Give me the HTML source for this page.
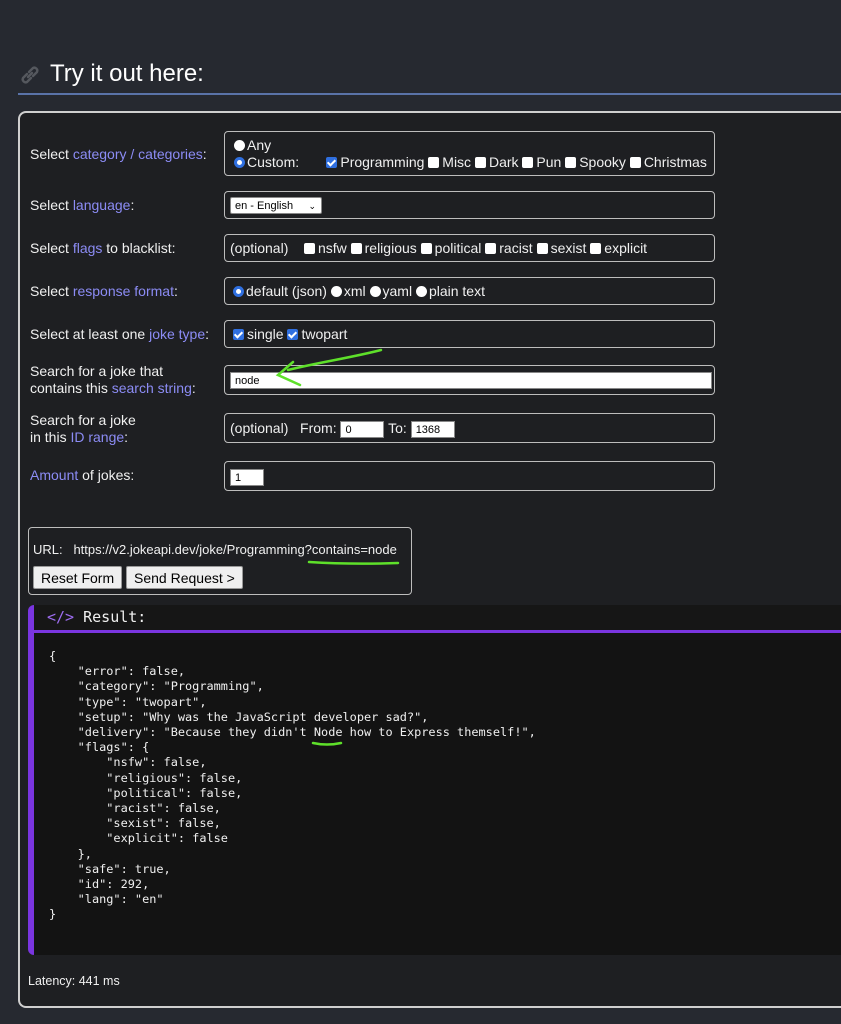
<!DOCTYPE html>
<html><head><meta charset="utf-8"><style>
*{box-sizing:border-box;margin:0;padding:0}
body{width:841px;height:1024px;background:#262930;font-family:"Liberation Sans",sans-serif;color:#f0f0f0;position:relative;overflow:hidden;font-size:14px}
.a{position:absolute}
.h{left:50px;top:60px;font-size:24px;color:#fff}
.hl{left:18px;top:93px;width:823px;height:2px;background:#5a73a8}
.panel{left:18px;top:111px;width:840px;height:897px;background:#1e1f22;border:2px solid #cfcfcf;border-right:none;border-radius:8px 0 0 8px}
.lbl{left:30px;font-size:14px;color:#f0f0f0;line-height:17px}
.lbl b{font-weight:normal;color:#8c8cf5}
.box{left:224px;width:491px;border:1.5px solid #bdbdbd;border-radius:4px;font-size:14px}
.cb{display:inline-block;width:11px;height:11px;background:#fff;border-radius:2px;vertical-align:-1px;margin-right:3px}
.cb.on{background:#2f6fe0;position:relative}
.cb.on:after{content:"";position:absolute;left:3px;top:1px;width:3px;height:6px;border:solid #fff;border-width:0 2px 2px 0;transform:rotate(45deg)}
.rd{display:inline-block;width:11px;height:11px;background:#fff;border-radius:50%;vertical-align:-1px;margin-right:2px}
.rd.on{background:#fff;border:3px solid #2f6fe0}
.in{display:inline-block;background:#fff;color:#000;font-size:11px;height:17px;line-height:17px;padding-left:4px;border:1px solid #888;vertical-align:middle}
.btn{display:inline-block;background:#efefef;color:#000;border:1px solid #999;border-radius:2px;padding:0 7px;height:23px;line-height:22px;font-size:14px}
pre{font-family:"DejaVu Sans Mono","Liberation Mono",monospace;font-size:11.9px;line-height:15.2px;color:#f0f0f0}
</style></head><body>
<svg class="a" style="left:18px;top:63px" width="24" height="24" viewBox="0 0 24 24"><g fill="none" stroke="#55585e" stroke-width="2.4" stroke-linecap="round"><path d="M10 14 L14 10"/><path d="M9 11 L5 15 a3 3 0 0 0 4 4 L13 15"/><path d="M11 9 L15 5 a3 3 0 0 1 4 4 L15 13"/></g></svg>
<div class="a h">Try it out here:</div>
<div class="a hl"></div>
<div class="a panel"></div>

<div class="a lbl" style="top:146px">Select <b>category / categories</b>:</div>
<div class="a box" style="top:131px;height:45px;padding:5px 0 0 9px;line-height:17px">
<div><span class="rd"></span>Any</div>
<div><span class="rd on"></span>Custom: &nbsp;&nbsp;&nbsp;&nbsp;&nbsp;&nbsp;<span class="cb on"></span>Programming <span class="cb"></span>Misc <span class="cb"></span>Dark <span class="cb"></span>Pun <span class="cb"></span>Spooky <span class="cb"></span>Christmas</div>
</div>

<div class="a lbl" style="top:197px">Select <b>language</b>:</div>
<div class="a box" style="top:191px;height:28px;padding:4px 0 0 5px"><span class="in" style="width:92px;border-radius:2px">en - English <span style="float:right;margin-right:5px;font-size:9px">&#8964;</span></span></div>

<div class="a lbl" style="top:240px">Select <b>flags</b> to blacklist:</div>
<div class="a box" style="top:234px;height:28px;padding:5px 0 0 5px">(optional) &nbsp;&nbsp;&nbsp;<span class="cb"></span>nsfw <span class="cb"></span>religious <span class="cb"></span>political <span class="cb"></span>racist <span class="cb"></span>sexist <span class="cb"></span>explicit</div>

<div class="a lbl" style="top:283px">Select <b>response format</b>:</div>
<div class="a box" style="top:277px;height:28px;padding:5px 0 0 8px"><span class="rd on"></span>default (json) <span class="rd"></span>xml <span class="rd"></span>yaml <span class="rd"></span>plain text</div>

<div class="a lbl" style="top:326px">Select at least one <b>joke type</b>:</div>
<div class="a box" style="top:320px;height:28px;padding:5px 0 0 8px"><span class="cb on"></span>single <span class="cb on"></span>twopart</div>

<div class="a lbl" style="top:363px">Search for a joke that<br>contains this <b>search string</b>:</div>
<div class="a box" style="top:365px;height:30px;padding:5px 0 0 5px"><span class="in" style="width:482px">node</span></div>

<div class="a lbl" style="top:412px">Search for a joke<br>in this <b>ID range</b>:</div>
<div class="a box" style="top:413px;height:30px;padding:6px 0 0 5px">(optional) &nbsp;&nbsp;From: <span class="in" style="width:44px">0</span> To: <span class="in" style="width:44px">1368</span></div>

<div class="a lbl" style="top:467px"><b>Amount</b> of jokes:</div>
<div class="a box" style="top:461px;height:30px;padding:6px 0 0 5px"><span class="in" style="width:34px">1</span></div>

<div class="a" style="left:28px;top:527px;width:384px;height:68px;border:1.5px solid #bdbdbd;border-radius:4px;background:#1e1f22"></div>
<div class="a" style="left:33px;top:542px;font-size:13px;white-space:nowrap">URL: &nbsp;&nbsp;https://v2.jokeapi.dev/joke/Programming?contains=node</div>
<div class="a" style="left:33px;top:566px;white-space:nowrap"><span class="btn">Reset Form</span> <span class="btn">Send Request &gt;</span></div>

<div class="a" style="left:28px;top:605px;width:813px;height:350px;background:#131313;border-left:6px solid #7a35e0;border-radius:6px 0 0 6px"></div>
<div class="a" style="left:34px;top:630px;width:807px;height:3px;background:#7a35e0"></div>
<div class="a" style="left:34px;top:605px;width:807px;height:25px;background:#161616"></div>
<pre class="a" style="left:47px;top:610px;font-size:15px"><span style="color:#9d6cf0">&lt;/&gt;</span> Result:</pre>
<pre class="a" style="left:49px;top:649px">{
    "error": false,
    "category": "Programming",
    "type": "twopart",
    "setup": "Why was the JavaScript developer sad?",
    "delivery": "Because they didn't Node how to Express themself!",
    "flags": {
        "nsfw": false,
        "religious": false,
        "political": false,
        "racist": false,
        "sexist": false,
        "explicit": false
    },
    "safe": true,
    "id": 292,
    "lang": "en"
}</pre>
<div class="a" style="left:28px;top:974px;font-size:12.5px">Latency: 441 ms</div>

<svg class="a" style="left:0;top:0" width="841" height="1024"><g fill="none" stroke="#5ee02a" stroke-width="2.5" stroke-linecap="round">
<path d="M381 350 C350 358 320 362 288 370"/><path d="M293 362 L278 375 L300 385"/>
<path d="M309 562 C340 564 370 564 398 563"/>
<path d="M313 743 C322 745 332 745 341 743"/>
</g></svg>
</body></html>
